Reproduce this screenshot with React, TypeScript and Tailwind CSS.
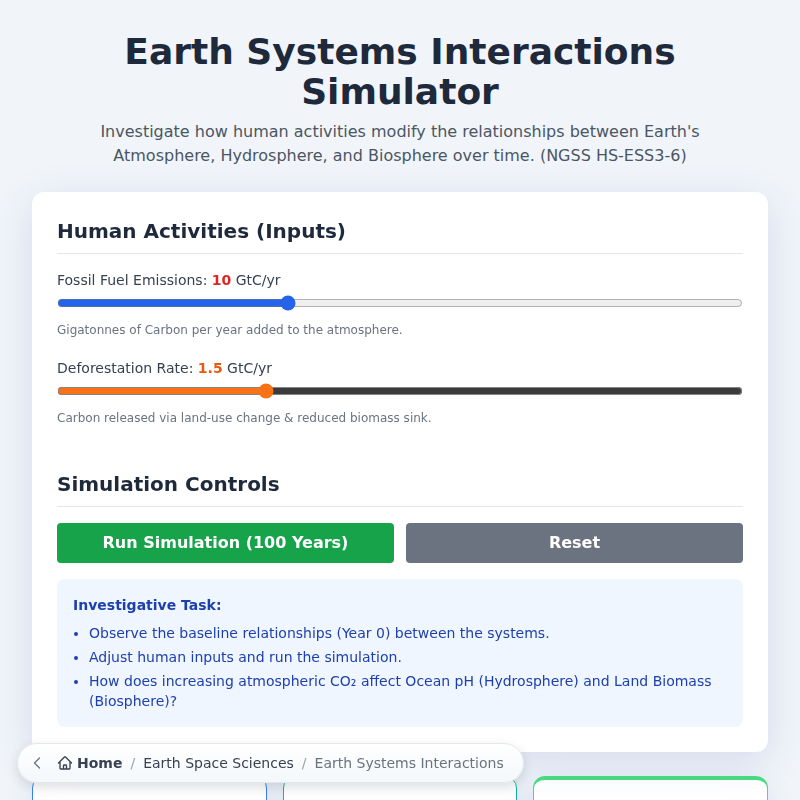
import { ChevronLeft } from "lucide-react";
import { HiOutlineHome } from "react-icons/hi2";

const font = "font-['DejaVu_Sans',sans-serif]";

const App = () => {
  return (
    <div className={`relative h-screen overflow-hidden bg-[#f1f5f9] p-8 ${font}`}>
      <header className="text-center">
        <h1 className="text-4xl font-bold text-[#1e293b]">
          Earth Systems Interactions Simulator
        </h1>
        <p className="mx-auto mt-2 max-w-[640px] text-base leading-6 text-[#4b5563]">
          Investigate how human activities modify the relationships between Earth's Atmosphere,
          Hydrosphere, and Biosphere over time. (NGSS HS-ESS3-6)
        </p>
      </header>

      <section className="mt-6 rounded-xl bg-white p-[25px] shadow-[0_10px_40px_rgba(50,70,170,0.15)] will-change-transform">
        <h2 className="border-b border-[#e5e7eb] pb-[8px] text-xl leading-[28px] font-bold text-[#1e293b]">
          Human Activities (Inputs)
        </h2>

        <div className="mt-[15px]">
          <label className="block text-sm leading-[22px] text-[#374151]">
            Fossil Fuel Emissions: <span className="font-bold text-[#dc2626]">10</span> GtC/yr
          </label>
          <input
            type="range"
            min={0}
            max={30}
            defaultValue={10}
            className="mt-[4px] block h-4 w-full accent-[#2563eb]"
          />
          <p className="mt-[10px] text-xs leading-[19px] text-[#6b7280]">
            Gigatonnes of Carbon per year added to the atmosphere.
          </p>
        </div>

        <div className="mt-[17px]">
          <label className="block text-sm leading-[22px] text-[#374151]">
            Deforestation Rate: <span className="font-bold text-[#ea580c]">1.5</span> GtC/yr
          </label>
          <input
            type="range"
            min={0}
            max={5}
            step={0.1}
            defaultValue={1.5}
            className="mt-[4px] block h-4 w-full accent-[#f97316]"
          />
          <p className="mt-[10px] text-xs leading-[19px] text-[#6b7280]">
            Carbon released via land-use change &amp; reduced biomass sink.
          </p>
        </div>

        <h2 className="mt-[42px] border-b border-[#e5e7eb] pb-[8px] text-xl leading-[28px] font-bold text-[#1e293b]">
          Simulation Controls
        </h2>

        <div className="mt-4 grid grid-cols-2 gap-3">
          <button className="h-10 rounded bg-[#16a34a] text-base font-bold text-white">
            Run Simulation (100 Years)
          </button>
          <button className="h-10 rounded bg-[#6b7280] text-base font-bold text-white">
            Reset
          </button>
        </div>

        <div className="mt-4 rounded-lg bg-[#eff6ff] p-4 text-sm text-[#1e40af]">
          <p className="leading-[20px] font-bold">Investigative Task:</p>
          <ul className="mt-2 list-disc pl-4 leading-5">
            <li className="mt-1">Observe the baseline relationships (Year 0) between the systems.</li>
            <li className="mt-1">Adjust human inputs and run the simulation.</li>
            <li className="mt-1">
              How does increasing atmospheric CO₂ affect Ocean pH (Hydrosphere) and Land Biomass
              (Biosphere)?
            </li>
          </ul>
        </div>
      </section>

      <div className="mt-6 grid grid-cols-3 gap-4">
        <div className="h-32 rounded-xl border border-[#3b82f6] bg-white shadow-[0_10px_30px_rgba(50,70,170,0.12)]" />
        <div className="h-32 rounded-xl border border-[#14b8a6] bg-white shadow-[0_10px_30px_rgba(50,70,170,0.12)]" />
        <div className="h-32 rounded-xl border border-t-4 border-[#4ade80] bg-white shadow-[0_10px_30px_rgba(50,70,170,0.12)]" />
      </div>

      <nav className="absolute top-[743px] left-[17px] flex h-10 w-[507px] items-center rounded-[20px] border border-[#e5e7eb] bg-gradient-to-b from-white to-[#f4f8fb] pl-[9px] text-sm text-[#374151] shadow-[0_4px_12px_rgba(0,0,0,0.12)] will-change-transform">
        <ChevronLeft size={20} strokeWidth={1.5} className="text-[#6b7280]" />
        <HiOutlineHome size={16} strokeWidth={2} className="ml-[10px]" />
        <span className="ml-[4px] font-bold">Home</span>
        <span className="mx-2 text-[#9ca3af]">/</span>
        <span>Earth Space Sciences</span>
        <span className="mx-2 text-[#9ca3af]">/</span>
        <span className="text-[#6b7280]">Earth Systems Interactions</span>
      </nav>
    </div>
  );
};

export default App;
